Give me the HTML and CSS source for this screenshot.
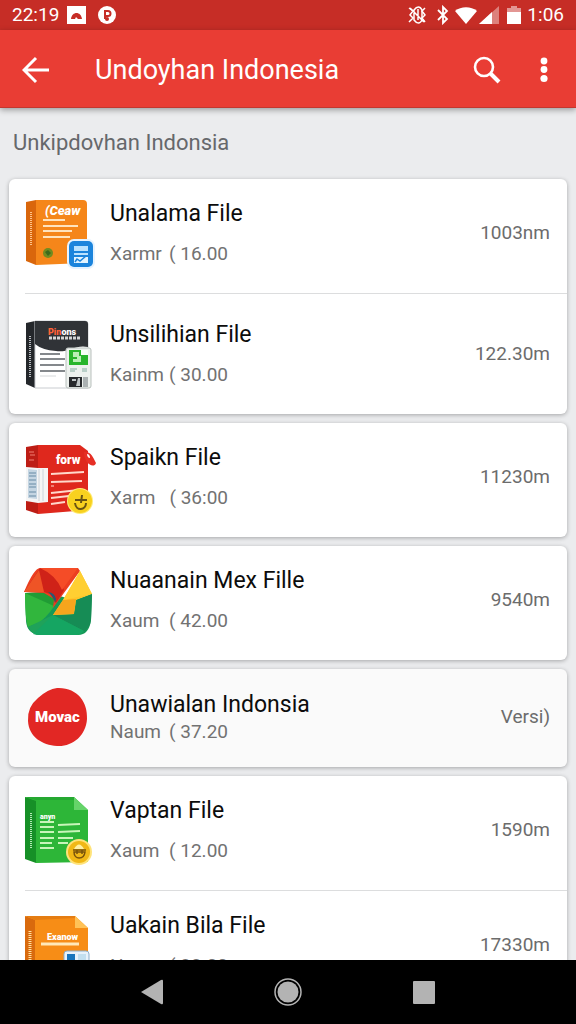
FILE: index.html
```html
<!DOCTYPE html>
<html lang="id">
<head>
    <meta charset="utf-8">
    <meta name="viewport" content="width=device-width, initial-scale=1">
    <title>Undoyhan Indonesia</title>
    <link rel="stylesheet" href="styles.css">
</head>
<body>
    <div class="status">
        <span class="clock">22:19</span>
        <svg class="status-left" width="50" height="20" viewBox="0 0 50 20">
            <path d="M0 1h19v18H0z" fill="#fff"/>
            <path d="M4 14c1-8 10-8 11 0h-4l-2-2-1 2z" fill="#c62d26"/>
            <circle cx="40" cy="10" r="9" fill="#fff"/>
            <path d="M38 14V6h3a2 2 0 0 1 0 5h-3" fill="none" stroke="#c62d26" stroke-width="2"/>
            <circle cx="40" cy="14" r="2" fill="#c62d26"/>
        </svg>
        <svg class="status-right" width="114" height="20" viewBox="0 0 114 20">
            <g fill="none" stroke="#fff" stroke-width="2">
                <path d="M1 3l4 3-3 4 3 3-4 4M17 3l-3 3 3 4-3 3 3 4" stroke-width="1.5"/>
                <path d="M6 5c3-4 6-4 8 0v10c-2 4-5 4-8 0zM10 4v11M2 3l14 14" stroke-width="1.5"/>
                <path d="M30 5l9 9-4 4V2l4 4-9 9" stroke-width="1.8"/>
            </g>
            <path d="M47 6c6-5 16-5 22 0L58 19z" fill="#fff"/>
            <path d="M71 19L91 1v18z" fill="#fff" fill-opacity=".4"/>
            <path d="M71 19L84 7v12z" fill="#fff"/>
            <path d="M99 3h4V1h6v2h4v5H99z" fill="#fff" fill-opacity=".5"/>
            <path d="M99 7h14v12H99z" fill="#fff"/>
        </svg>
        <span class="clock">1:06</span>
    </div>

    <header class="appbar">
        <button class="icon-button back" aria-label="Back">
            <svg width="28" height="28" viewBox="0 0 28 28"><path d="M27 14H3M14 2L2 14l12 12" fill="none" stroke="#fff" stroke-width="3"/></svg>
        </button>
        <h1 class="appbar-title">Undoyhan Indonesia</h1>
        <button class="icon-button search" aria-label="Search">
            <svg width="28" height="28" viewBox="0 0 28 28"><circle cx="11" cy="11" r="9" fill="none" stroke="#fff" stroke-width="2.6"/><path d="M17 17l9 9" stroke="#fff" stroke-width="4"/></svg>
        </button>
        <button class="icon-button more" aria-label="More">
            <svg width="8" height="26" viewBox="0 0 8 26" fill="#fff"><circle cx="4" cy="4" r="3.4"/><circle cx="4" cy="12.5" r="3.4"/><circle cx="4" cy="21.5" r="3.6"/></svg>
        </button>
    </header>

    <main class="content">
        <h2 class="section">Unkipdovhan Indonsia</h2>

        <ul class="card">
            <li class="row">
                <svg class="icon" viewBox="0 0 72 67">
                    <path d="M1 3l10-2v65L1 62z" fill="#d9660c"/>
                    <path d="M11 1h47q4 0 4 4v56q0 3-3 3l-48 2z" fill="#f5861a"/>
                    <path d="M6 13v34" stroke="#ffc48a" stroke-width="2" stroke-dasharray="1 1"/>
                    <text x="20" y="16" class="logo logo-wide">(Ceaw</text>
                    <path d="M18 21h22M18 27h35M18 32h29M18 38h27" stroke="#ffe3bd" stroke-width="2"/>
                    <circle cx="23" cy="54" r="5" fill="#718b20"/>
                    <path d="M20 53l3-2 3 3-3 3" fill="#3c6a1c"/>
                    <rect x="42" y="40" width="28" height="30" rx="7" fill="#e6f3ff"/>
                    <rect x="44" y="42" width="24" height="26" rx="5" fill="#1b84dc"/>
                    <path d="M49 47h14v5H49zM49 54h14v2H49z" fill="#b9e2ff"/>
                    <path d="M49 58h14v6H49z" fill="#e2f4ff"/>
                    <path d="M50 63l2-3 3 2 6-5" fill="none" stroke="#1b84dc" stroke-width="1.5"/>
                </svg>
                <div class="info">
                    <h3 class="name">Unalama File</h3>
                    <p class="detail"><span>Xarmr</span><span>( 16.00</span></p>
                </div>
                <span class="size">1003nm</span>
            </li>
            <li class="row row-tall">
                <svg class="icon" viewBox="0 0 72 67">
                    <path d="M1 3l9-2v67l-9-4z" fill="#24272b"/>
                    <path d="M10 1h50q3 0 3 3v64H10z" fill="#fff" stroke="#c9ccd0" stroke-width="1"/>
                    <path d="M10 1h50q3 0 3 3v23c-12-3-20 6-32 4q-14-1-21-7z" fill="#303337"/>
                    <path d="M5 16v42" stroke="#b9bdc2" stroke-width="2" stroke-dasharray="1 1"/>
                    <text x="23" y="15" class="logo logo-small"><tspan fill="#ff6237">Pin</tspan>ons</text>
                    <path d="M24 18h31" stroke="#d5d5d5" stroke-width="3" stroke-dasharray="3 1"/>
                    <path d="M15 34h20M15 39h25M15 45h24M15 51h25" stroke="#84888c" stroke-width="2"/>
                    <path d="M15 56h16" stroke="#d5d8da" stroke-width="1"/>
                    <rect x="41" y="28" width="25" height="40" rx="2" fill="#edf1ee" stroke="#b9c0bd"/>
                    <path d="M44 30h19v15H44z" fill="#27b52b"/>
                    <path d="M56 30h7v5h-7z" fill="#f7fff7"/>
                    <path d="M48 32h6v4h2v6h-8v-3h4v-2h-4z" fill="#b9efb5"/>
                    <path d="M45 49h7M45 51h5M57 49h5M57 51h5" stroke="#b9cfc8" stroke-width="2"/>
                    <path d="M44 57h13v10H44z" fill="#27292c"/>
                    <path d="M47 59h4v2h-4zM53 58l-2 8h4v-8z" fill="#bfc5c6"/>
                    <path d="M58 57h5v10h-5z" fill="#abb1b2"/>
                </svg>
                <div class="info">
                    <h3 class="name">Unsilihian File</h3>
                    <p class="detail"><span>Kainm</span><span>( 30.00</span></p>
                </div>
                <span class="size">122.30m</span>
            </li>
        </ul>

        <ul class="card">
            <li class="row">
                <svg class="icon" viewBox="0 0 72 67">
                    <path d="M1 4l12-2v69L1 67z" fill="#bd1d15"/>
                    <path d="M13 2h42l8 6v59l-50 4z" fill="#df281d"/>
                    <path d="M1 24l12 1h10v34l-10 1-12-2z" fill="#f5f5f5"/>
                    <path d="M3 26l9 1v29l-9-1z" fill="#c4d5e2"/>
                    <path d="M4 30h7M4 33h7M4 37h7M4 41h7M4 44h7M4 49h7M4 53h7" stroke="#668aa4" stroke-width="1"/>
                    <path d="M14 26v32M18 26v32" stroke="#ccd4da" stroke-width="1"/>
                    <path d="M4 9h5M5 12h5M4 17h5" stroke="#f18075" stroke-width="1"/>
                    <text x="31" y="21" class="logo logo-bold">forw</text>
                    <path d="M59 9c7-1 9 5 12 11-2 6-12 1-12-11z" fill="#e62f25"/>
                    <path d="M62 11c2 0 3 2 3 4-2 0-3-2-3-4z" fill="#fff"/>
                    <path d="M26 31l33-2M26 39l31-1M26 50l28-3M26 55l18-2M26 61l14-2" stroke="#ffd8cb" stroke-width="2"/>
                    <path d="M26 43h3" stroke="#ffd8cb" stroke-width="1"/>
                    <circle cx="55" cy="58" r="13" fill="#ffec78"/>
                    <circle cx="55" cy="58" r="12" fill="#f8d11f"/>
                    <path d="M50 57h12M57 52l-1 8M50 60c1 9 11 7 11 0" fill="none" stroke="#695413" stroke-width="2"/>
                </svg>
                <div class="info">
                    <h3 class="name">Spaikn File</h3>
                    <p class="detail"><span>Xarm</span><span>( 36:00</span></p>
                </div>
                <span class="size">11230m</span>
            </li>
        </ul>

        <ul class="card">
            <li class="row">
                <svg class="icon" viewBox="0 0 72 67">
                    <path d="M0 27l31 2 18 5 18-6-1 26q-2 15-13 15H15Q2 68 1 55z" fill="#159957"/>
                    <path d="M0 27l24-1 7 10q-4 10-16 20L3 61Q0 53 0 27z" fill="#31b63d"/>
                    <path d="M0 27l24-1 7 10-2 4z" fill="#209c35"/>
                    <path d="M15 2h38l2 3-27 37 1-9-10-6-20-1Q9 2 15 2z" fill="#ec3e20"/>
                    <path d="M15 2l-16 24h20l6 2 6 9 8-13Q32 7 15 2z" fill="#cf2218"/>
                    <path d="M15 2q16 7 22 22l16-22z" fill="#f54c27"/>
                    <path d="M14 4L-1 26h20z" fill="#ef5426"/>
                    <path d="M55 5l12 23-16 6-2 14-21 1 10-15z" fill="#ffc629"/>
                    <path d="M28 49l10-15 13-1-2 15z" fill="#f6a51d"/>
                    <path d="M55 5L38 34l29-6z" fill="#ffcf32"/>
                    <path d="M28 49h21l3-15 15-6-1 26q-1 8-8 12z" fill="#168c55"/>
                    <path d="M28 49L3 61q4 8 12 8h36q4 0 8-4z" fill="#1fa25a"/>
                    <path d="M28 49L8 68q3 1 7 1h36q4 0 8-4z" fill="#15a562"/>
                    <path d="M23 26q7 1 8 7l-1 4q-1-6-7-11z" fill="#245976"/>
                </svg>
                <div class="info">
                    <h3 class="name">Nuaanain Mex Fille</h3>
                    <p class="detail"><span>Xaum</span><span>( 42.00</span></p>
                </div>
                <span class="size">9540m</span>
            </li>
        </ul>

        <ul class="card card-muted">
            <li class="row row-short">
                <svg class="icon" viewBox="0 0 72 54">
                    <path d="M32-2C52-3 63 12 62 29S47 57 32 56 4 47 3 31Q2 17 13 8 23-1 32-2z" fill="#e22724"/>
                    <text x="10" y="32" class="logo logo-round">Movac</text>
                </svg>
                <div class="info">
                    <h3 class="name">Unawialan Indonsia</h3>
                    <p class="detail"><span>Naum</span><span>( 37.20</span></p>
                </div>
                <span class="size">Versi)</span>
            </li>
        </ul>

        <ul class="card">
            <li class="row">
                <svg class="icon" viewBox="0 0 72 67">
                    <path d="M0 1l11 2v64L0 63z" fill="#169027"/>
                    <path d="M0 1h49l14 13v52l-52 1V5z" fill="#2db638"/>
                    <path d="M0 1h49v3H11z" fill="#25a831"/>
                    <path d="M49 1l14 13H49z" fill="#65d469"/>
                    <path d="M6 17v35" stroke="#b4e8b6" stroke-width="2" stroke-dasharray="1 1"/>
                    <text x="15" y="23" class="logo logo-tiny">anyn</text>
                    <path d="M15 26h14M15 31h14M15 36h14M15 42h14M15 47h12M15 52h14" stroke="#c8f5b9" stroke-width="2"/>
                    <path d="M33 29l22-1M33 36l22-1M33 42h15M33 47h10" stroke="#c8f5b9" stroke-width="2"/>
                    <circle cx="54" cy="56" r="13" fill="#ffe37a"/>
                    <circle cx="54" cy="56" r="11" fill="#f1b817"/>
                    <path d="M49 53q5-9 10 0z" fill="#fff0a5"/>
                    <path d="M48 54h13M49 56c0 8 10 8 11 0zM52 54v4M57 54v4" fill="none" stroke="#78520b" stroke-width="1.5"/>
                </svg>
                <div class="info">
                    <h3 class="name">Vaptan File</h3>
                    <p class="detail"><span>Xaum</span><span>( 12.00</span></p>
                </div>
                <span class="size">1590m</span>
            </li>
            <li class="row">
                <svg class="icon" viewBox="0 0 72 67">
                    <path d="M0 5l10 3v62L0 66z" fill="#d96a0d"/>
                    <path d="M0 5h50l13 12v53H10V9z" fill="#f78d16"/>
                    <path d="M0 5h50v2L10 9z" fill="#e57d12"/>
                    <path d="M50 5l13 12H50z" fill="#ffc257"/>
                    <path d="M5 20v40" stroke="#ffe0a2" stroke-width="3" stroke-dasharray="1 1"/>
                    <text x="22" y="29" class="logo logo-small">Exanow</text>
                    <path d="M16 33h38" stroke="#ffe9b8" stroke-width="3"/>
                    <rect x="39" y="40" width="25" height="28" rx="3" fill="#e7f2fb" stroke="#8badc9"/>
                    <path d="M42 43h8v10h-8z" fill="#1774bb"/>
                    <path d="M53 43h8v8h-8z" fill="#c2dfef"/>
                </svg>
                <div class="info">
                    <h3 class="name">Uakain Bila File</h3>
                    <p class="detail"><span>Naum</span><span>( 32.00</span></p>
                </div>
                <span class="size">17330m</span>
            </li>
        </ul>
    </main>

    <nav class="navbar">
        <button class="nav-button" aria-label="Back">
            <svg width="28" height="28" viewBox="0 0 28 28"><path d="M3 14L23 2q2-1 2 1v22q0 2-2 1z" fill="#b3b3b3"/></svg>
        </button>
        <button class="nav-button" aria-label="Home">
            <svg width="28" height="28" viewBox="0 0 28 28"><circle cx="14" cy="14" r="13" fill="none" stroke="#b3b3b3" stroke-width="1.5"/><circle cx="14" cy="14" r="10.5" fill="#b3b3b3"/></svg>
        </button>
        <button class="nav-button" aria-label="Recent apps">
            <svg width="28" height="28" viewBox="0 0 28 28"><rect x="3" y="3" width="22" height="23" rx="1" fill="#b3b3b3"/></svg>
        </button>
    </nav>
</body>
</html>
```
FILE: styles.css
```css
* {
    box-sizing: border-box;
}
body {
    margin: 0;
    height: 100vh;
    display: flex;
    flex-direction: column;
    background-color: #ebecee;
    font-family: Roboto, sans-serif;
}
h1, h2, h3, p, ul {
    margin: 0;
    padding: 0;
    font-weight: 400;
}
button {
    border: 0;
    padding: 0;
    background: none;
    display: flex;
    align-items: center;
    justify-content: center;
    cursor: pointer;
}
.status {
    flex: none;
    height: 30px;
    padding: 0 12px;
    display: flex;
    align-items: center;
    background-color: #c62d26;
    color: #fff;
}
.clock {
    font-size: 19px;
    line-height: 28px;
}
.status-left {
    margin-left: 8px;
}
.status-right {
    margin-left: auto;
    margin-right: 5px;
}
.appbar {
    flex: none;
    height: 78px;
    padding: 2px 20px 0;
    display: flex;
    align-items: center;
    background-color: #e93d34;
    border-bottom: 1px solid #c3372f;
    box-shadow: 0 2px 6px rgba(0,0,0,0.35);
    z-index: 1;
}
.icon-button {
    height: 48px;
}
.back {
    width: 32px;
}
.search {
    width: 48px;
    margin-left: auto;
}
.more {
    width: 48px;
    margin-left: 9px;
    margin-right: -12px;
}
.appbar-title {
    margin-left: 43px;
    color: #fff;
    font-size: 27px;
    line-height: 36px;
}
.content {
    flex: 1;
    min-height: 0;
    overflow: hidden;
    padding: 0 9px;
}
.section {
    padding: 19px 4px 20px;
    color: #66686b;
    font-size: 22px;
    line-height: 32px;
}
.card {
    margin-bottom: 9px;
    list-style: none;
    background-color: #fff;
    border-radius: 6px;
    box-shadow: 0 1px 4px rgba(0,0,0,0.3);
}
.card-muted {
    background-color: #fafafa;
}
.row {
    margin-left: 16px;
    padding: 20px 17px 27px 0;
    display: flex;
    align-items: center;
}
.row + .row {
    border-top: 1px solid #dcddde;
}
.row-tall {
    padding-top: 26px;
}
.row-short {
    padding-top: 21px;
    padding-bottom: 23px;
}
.icon {
    flex: none;
    width: 72px;
    height: 67px;
    margin-right: 13px;
    overflow: visible;
}
.row-short .icon {
    height: 54px;
}
.info {
    flex: 1;
}
.name {
    color: #0c0c0c;
    font-size: 23px;
    line-height: 30px;
    margin-bottom: 13px;
}
.row-short .name {
    margin-bottom: 0;
}
.detail {
    width: 118px;
    display: flex;
    justify-content: space-between;
    white-space: pre;
    color: #727272;
    font-size: 19px;
    line-height: 24px;
}
.size {
    color: #6c6c6c;
    font-size: 19px;
    line-height: 24px;
}
.logo {
    fill: #fff;
    font-weight: 900;
}
.logo-wide {
    font-size: 13px;
    font-style: italic;
}
.logo-small {
    font-size: 9px;
}
.logo-bold {
    font-size: 12px;
}
.logo-round {
    font-size: 15px;
}
.logo-tiny {
    font-size: 7px;
}
.navbar {
    flex: none;
    height: 64px;
    display: flex;
    align-items: center;
    justify-content: center;
    gap: 108px;
    background-color: #000;
    z-index: 1;
}
.nav-button {
    width: 28px;
    height: 48px;
}
```
